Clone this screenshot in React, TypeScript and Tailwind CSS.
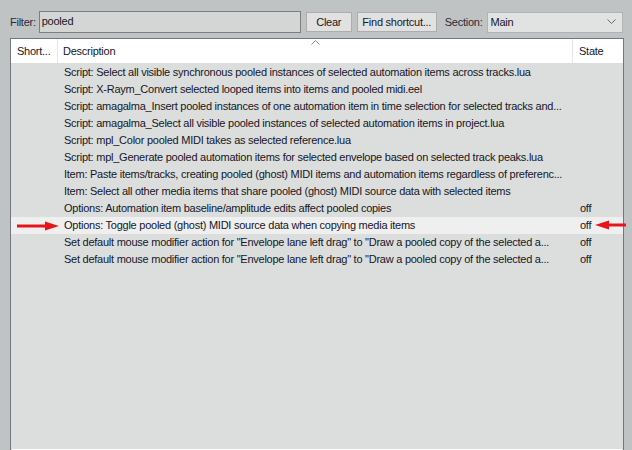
import React from 'react';

interface Row {
    desc: string;
    state?: string;
    highlight?: boolean;
}

const rows: Row[] = [
    { desc: 'Script: Select all visible synchronous pooled instances of selected automation items across tracks.lua' },
    { desc: 'Script: X-Raym_Convert selected looped items into items and pooled midi.eel' },
    { desc: 'Script: amagalma_Insert pooled instances of one automation item in time selection for selected tracks and...' },
    { desc: 'Script: amagalma_Select all visible pooled instances of selected automation items in project.lua' },
    { desc: 'Script: mpl_Color pooled MIDI takes as selected reference.lua' },
    { desc: 'Script: mpl_Generate pooled automation items for selected envelope based on selected track peaks.lua' },
    { desc: 'Item: Paste items/tracks, creating pooled (ghost) MIDI items and automation items regardless of preferenc...' },
    { desc: 'Item: Select all other media items that share pooled (ghost) MIDI source data with selected items' },
    { desc: 'Options: Automation item baseline/amplitude edits affect pooled copies', state: 'off' },
    { desc: 'Options: Toggle pooled (ghost) MIDI source data when copying media items', state: 'off', highlight: true },
    { desc: 'Set default mouse modifier action for "Envelope lane left drag" to "Draw a pooled copy of the selected a...', state: 'off' },
    { desc: 'Set default mouse modifier action for "Envelope lane left drag" to "Draw a pooled copy of the selected a...', state: 'off' },
];

const font = "font-['Liberation_Sans',Arial,sans-serif]";

const App: React.FC = () => {
    return (
        <div className={`relative w-[632px] h-[450px] overflow-hidden bg-[#bfc3c4] text-[11px] tracking-[-0.25px] text-[#161626] ${font}`}>
            {/* Top filter bar */}
            <div className="flex items-center h-[22px] mt-[11px] pl-[10px]">
                <span className="text-[#2a2a3a]">Filter:</span>
                <div className="ml-[3px] w-[262px] h-[22px] border border-[#7c7e80] bg-[#d3d6d5] pl-[2px] leading-[18px]">
                    pooled
                </div>
                <button className="ml-[5px] w-[46px] h-[20px] border border-[#adadad] bg-[#e1e1e1] leading-[18px]">Clear</button>
                <button className="ml-[5px] w-[80px] h-[20px] border border-[#adadad] bg-[#e1e1e1] leading-[18px]">Find shortcut...</button>
                <span className="ml-[8px] text-[#2a2a3a]">Section:</span>
                <div className="ml-[4px] w-[136px] h-[21px] border border-[#b0b2b4] bg-[#e1e2e2] flex items-center justify-between pl-[3px] pr-[6px]">
                    <span>Main</span>
                    <svg width="9" height="6" viewBox="0 0 9 6">
                        <path d="M0.5 0.5 L4.5 4.5 L8.5 0.5" fill="none" stroke="#6a6a6a" strokeWidth="1" />
                    </svg>
                </div>
            </div>

            {/* Action list */}
            <div className="mt-[5px] ml-[10px] w-[614px] h-[412px] border-l border-r border-t border-[#737680] bg-[#dcdedd] flex flex-col">
                <div className="relative flex h-[24px] bg-white items-center">
                    <div className="w-[47px] pl-[6px] h-full leading-[24px] border-r border-[#e5e5e5]">Short...</div>
                    <div className="w-[515px] pl-[5px] h-full leading-[24px] border-r border-[#e5e5e5]">Description</div>
                    <div className="pl-[6px] h-full leading-[24px]">State</div>
                    <svg className="absolute left-[300px] top-[1px]" width="9" height="5" viewBox="0 0 9 5">
                        <path d="M0.5 4.5 L4.5 0.5 L8.5 4.5" fill="none" stroke="#8a8a8a" strokeWidth="1" />
                    </svg>
                </div>
                <div className="pt-[1px]">
                    {rows.map((r, i) => (
                        <div key={i} className={`flex h-[17px] leading-[17px] ${r.highlight ? 'bg-[#efefef]' : ''}`}>
                            <div className="w-[47px]" />
                            <div className="w-[515px] pl-[6px] whitespace-nowrap">{r.desc}</div>
                            <div className="pl-[7px]">{r.state}</div>
                        </div>
                    ))}
                </div>
                <div className="flex-1" />
                <div className="h-[1px] bg-white mx-[1px]" />
            </div>

            {/* Red annotation arrows */}
            <svg className="absolute left-[17px] top-[220px]" width="44" height="12" viewBox="0 0 44 12">
                <path d="M0 6 H32" stroke="#e8141c" strokeWidth="3" />
                <path d="M28 1.5 L42 6 L28 10.5 Z" fill="#e8141c" />
            </svg>
            <svg className="absolute left-[594px] top-[219px]" width="32" height="12" viewBox="0 0 32 12">
                <path d="M12 6 H32" stroke="#e8141c" strokeWidth="3" />
                <path d="M15 1.5 L1 6 L15 10.5 Z" fill="#e8141c" />
            </svg>
        </div>
    );
};

export default App;
